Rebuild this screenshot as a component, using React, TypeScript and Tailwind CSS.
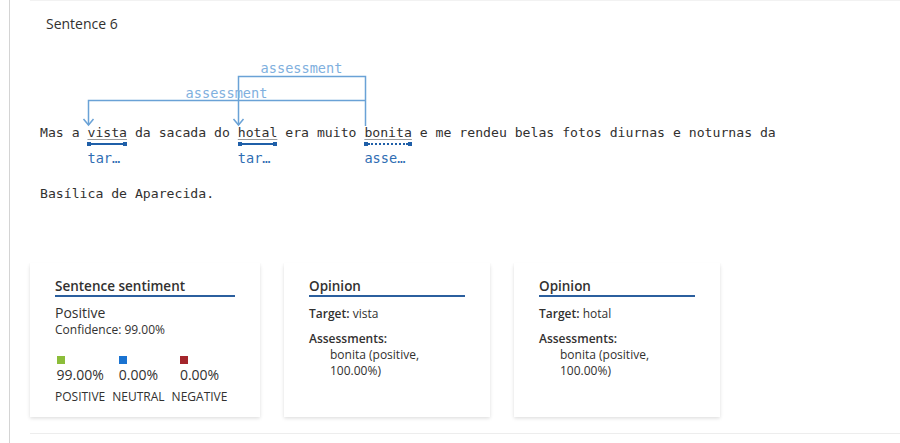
import React from 'react';

const mono = "font-['DejaVu_Sans_Mono','Liberation_Mono',monospace]";
const ui = "font-['Open_Sans','Noto_Sans',sans-serif]";

type WordProps = { word: string; label: string; dotted?: boolean };

// a word with its entity bar and short label below
const Tagged: React.FC<WordProps> = ({ word, label, dotted }) => (
  <span className="flex flex-col">
    <span className="underline decoration-[#9a9a9a] underline-offset-[2px] leading-[18px]">{word}</span>
    <span className="flex items-center h-[4px]">
      <span className="w-[4px] h-[4px] bg-[#1f5fa8]" />
      {dotted ? (
        <span className="flex-1 border-t-2 border-dotted border-[#1f5fa8]" />
      ) : (
        <span className="flex-1 h-[2px] bg-[#1f5fa8]" />
      )}
      <span className="w-[4px] h-[4px] bg-[#1f5fa8]" />
    </span>
    <span className="mt-[4px] leading-[16px] text-[13.6px] text-[#2f6db3]">{label}</span>
  </span>
);

const Arcs: React.FC = () => (
  <svg width="820" height="66" className="block overflow-visible">
    <g fill="none" stroke="#6aa2d6" strokeWidth="1.5">
      <path d="M198.5 67 V18.5 H325.5 V68" />
      <path d="M48.5 67 V42.5 H325.5" />
      <path d="M43.5 61 L48.5 67 L53.5 61" />
      <path d="M193.5 61 L198.5 67 L203.5 61" />
    </g>
    <g fill="#7fb0de" fontSize="13.6" textAnchor="middle" fontFamily="DejaVu Sans Mono, monospace">
      <text x="261.5" y="15">assessment</text>
      <text x="186.5" y="40">assessment</text>
    </g>
  </svg>
);

const CardTitle: React.FC<{ children: React.ReactNode }> = ({ children }) => (
  <div className="text-[13.5px] leading-[18px] font-semibold text-[#323130] border-b-2 border-[#2b5f9e]">
    {children}
  </div>
);

const Score: React.FC<{ color: string; value: string; label: string }> = ({ color, value, label }) => (
  <div className="flex flex-col items-center">
    <div className="flex flex-col items-start">
      <span className={`w-[8px] h-[8px] ${color}`} />
      <span className="mt-[2px] text-[14px] leading-[18px]">{value}</span>
    </div>
    <span className="mt-[5px] text-[12px] leading-[16px]">{label}</span>
  </div>
);

const OpinionCard: React.FC<{ target: string }> = ({ target }) => (
  <div className="w-[206px] h-[154px] bg-white px-[25px] pt-[14px] shadow-[0_1.6px_3.6px_0_rgba(0,0,0,0.132),0_0.3px_0.9px_0_rgba(0,0,0,0.108)]">
    <CardTitle>Opinion</CardTitle>
    <div className="mt-[9px] text-[12px] leading-[16px]">
      <span className="font-semibold">Target:</span> {target}
    </div>
    <div className="mt-[9px] text-[12px] leading-[16px] font-semibold">Assessments:</div>
    <div className="pl-[21px] w-[140px] text-[12px] leading-[16px]">
      bonita (positive,
      <br />
      100.00%)
    </div>
  </div>
);

const App: React.FC = () => {
  return (
    <div className={`h-[443px] w-[900px] overflow-hidden bg-white pl-[9px] text-[#323130] ${ui}`}>
      <div className="h-full border-l border-[#d4d4d4] pl-[20px]">
        <div className="border-t border-[#f2f2f2]">
          <div className="pl-[16px] pt-[13px] text-[14px] leading-[20px]">Sentence 6</div>

          <div className={`pl-[10px] mt-[24px] text-[13.15px] text-[#323130] ${mono}`}>
            <Arcs />
            <div className="flex items-start whitespace-pre">
              <span className="leading-[18px]">Mas a </span>
              <Tagged word="vista" label="tar…" />
              <span className="leading-[18px]"> da sacada do </span>
              <Tagged word="hotal" label="tar…" />
              <span className="leading-[18px]"> era muito </span>
              <Tagged word="bonita" label="asse…" dotted />
              <span className="leading-[18px]"> e me rendeu belas fotos diurnas e noturnas da</span>
            </div>
            <div className="mt-[19px] leading-[18px]">Basílica de Aparecida.</div>
          </div>

          <div className="mt-[60px] flex gap-[24px]">
            <div className="w-[230px] h-[154px] bg-white px-[25px] pt-[14px] shadow-[0_1.6px_3.6px_0_rgba(0,0,0,0.132),0_0.3px_0.9px_0_rgba(0,0,0,0.108)]">
              <CardTitle>Sentence sentiment</CardTitle>
              <div className="mt-[7px] text-[14px] leading-[18px]">Positive</div>
              <div className="text-[12px] leading-[16px]">Confidence: 99.00%</div>
              <div className="mt-[18px] flex gap-[7px]">
                <Score color="bg-[#8cbd3a]" value="99.00%" label="POSITIVE" />
                <Score color="bg-[#1a73d1]" value="0.00%" label="NEUTRAL" />
                <Score color="bg-[#a4262c]" value="0.00%" label="NEGATIVE" />
              </div>
            </div>
            <OpinionCard target="vista" />
            <OpinionCard target="hotal" />
          </div>

          <div className="mt-[16px] border-t border-[#ededed]" />
        </div>
      </div>
    </div>
  );
};

export default App;
